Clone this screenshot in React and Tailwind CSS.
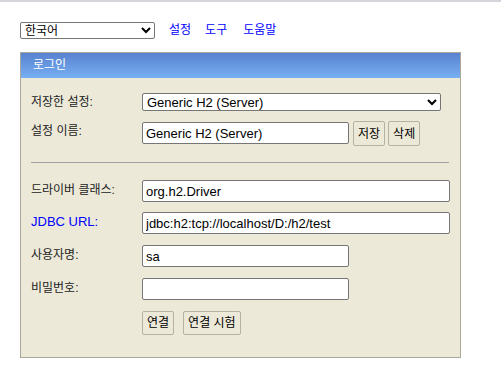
import React from "react";

const font = { fontFamily: '"Liberation Sans", "Noto Sans CJK KR", sans-serif' };

function Field({ label, value, wide = true, blue = false, mt = "mt-[10px]" }) {
  return (
    <div className={`flex items-start ${mt}`}>
      <div
        className={`w-[111px] shrink-0 pt-[2px] leading-[16px] ${blue ? "text-[13px] text-[#0000ff]" : "text-[12px] text-[#222]"}`}
      >
        {label}
      </div>
      <input
        readOnly
        defaultValue={value}
        className={`h-[22px] rounded-[2px] border border-[#767676] bg-white px-[3px] text-[13px] text-black outline-none ${wide ? "w-[308px]" : "w-[207px]"}`}
        style={font}
      />
    </div>
  );
}

function Btn({ children }) {
  return (
    <button className="h-[24px] rounded-[2px] border border-[#b5b2a5] bg-[#ece9d8] px-[4px] text-[12px] leading-[20px] text-black">
      {children}
    </button>
  );
}

export default function App() {
  return (
    <div className="min-h-[373px] w-[501px] bg-white" style={font}>
      <div className="h-[2px] bg-[#d6d4da]" />
      <div className="ml-[20px] mt-[20px] flex h-[17px] items-center text-[12px] leading-[17px]">
        <select
          defaultValue="ko"
          className="h-[17px] w-[135px] rounded-[2px] border border-[#767676] bg-white text-[12px] text-black"
          style={{ ...font, appearance: "auto" }}
        >
          <option value="ko">한국어</option>
        </select>
        <a className="ml-[14px] text-[#0000ff]">설정</a>
        <a className="ml-[14px] text-[#0000ff]">도구</a>
        <a className="ml-[16px] text-[#0000ff]">도움말</a>
      </div>

      <div className="ml-[20px] mt-[13px] w-[441px] border border-[#aca899] bg-[#ece9d8] pb-[22px]">
        <div className="h-[25px] bg-gradient-to-b from-[#5882cf] to-[#78aff3] pl-[12px] text-[12px] leading-[25px] text-white">
          로그인
        </div>
        <div className="px-[10px]">
          <div className="mt-[15px] flex items-center">
            <div className="w-[111px] shrink-0 text-[12px] text-[#222]">저장한 설정:</div>
            <select
              defaultValue="g"
              className="h-[18px] w-[299px] rounded-[2px] border border-[#767676] bg-white text-[13px] text-black"
              style={{ ...font, appearance: "auto" }}
            >
              <option value="g">Generic H2 (Server)</option>
            </select>
          </div>
          <div className="mt-[10px] flex items-start">
            <div className="w-[111px] shrink-0 pt-[2px] text-[12px] leading-[16px] text-[#222]">설정 이름:</div>
            <input
              readOnly
              defaultValue="Generic H2 (Server)"
              className="mt-[1px] h-[22px] w-[207px] rounded-[2px] border border-[#767676] bg-white px-[3px] text-[13px] text-black outline-none"
              style={font}
            />
            <div className="ml-[4px] flex gap-[3px]">
              <button className="h-[25px] rounded-[2px] border border-[#b5b2a5] bg-[#ece9d8] px-[4px] text-[12px] text-black">저장</button>
              <button className="h-[25px] rounded-[2px] border border-[#b5b2a5] bg-[#ece9d8] px-[4px] text-[12px] text-black">삭제</button>
            </div>
          </div>
          <div className="mr-[1px] mt-[16px] h-px bg-[#a0a0a0]" />
          <Field label="드라이버 클래스:" value="org.h2.Driver" mt="mt-[17px]" />
          <Field label="JDBC URL:" value="jdbc:h2:tcp://localhost/D:/h2/test" blue />
          <Field label="사용자명:" value="sa" wide={false} mt="mt-[11px]" />
          <Field label="비밀번호:" value="" wide={false} mt="mt-[11px]" />
          <div className="ml-[111px] mt-[11px] flex gap-[9px]">
            <Btn>연결</Btn>
            <Btn>연결 시험</Btn>
          </div>
        </div>
      </div>
    </div>
  );
}
